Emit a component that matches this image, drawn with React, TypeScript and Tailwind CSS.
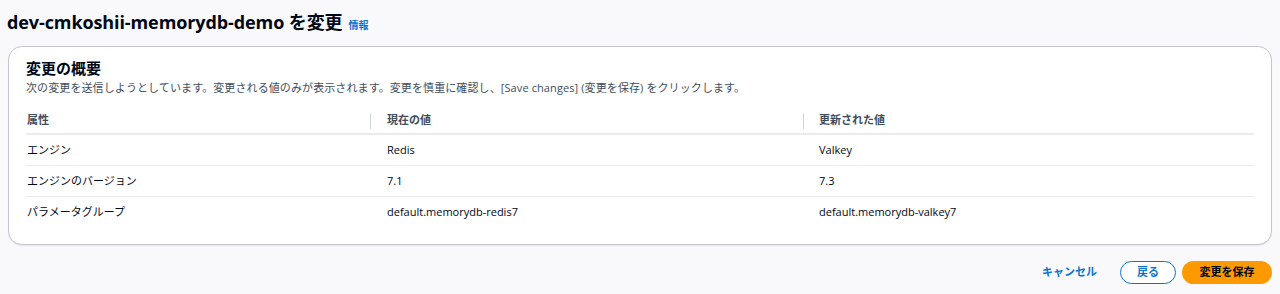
import React from "react";

const rows = [
  ["エンジン", "Redis", "Valkey"],
  ["エンジンのバージョン", "7.1", "7.3"],
  ["パラメータグループ", "default.memorydb-redis7", "default.memorydb-valkey7"],
];

export default function App() {
  return (
    <div
      className="w-[1280px] h-[294px] bg-[#f9f9fb] text-[#000716] overflow-hidden"
      style={{ fontFamily: '"Open Sans", "Noto Sans CJK JP", sans-serif' }}
    >
      <div className="flex items-baseline gap-[6px] pl-[7px] pt-[9px] h-[46px]">
        <h1 className="text-[18px] font-bold leading-[26px] tracking-[-0.1px]">dev-cmkoshii-memorydb-demo を変更</h1>
        <span className="text-[10px] font-bold text-[#0972d3]">情報</span>
      </div>
      <div className="mx-[8px] h-[199px] rounded-[14px] border border-[#c6c6cd] bg-white shadow-[0_1px_1px_rgba(0,7,22,0.08)] px-[17px] pt-[9px]">
        <h2 className="text-[15px] font-bold leading-[24px]">変更の概要</h2>
        <p className="text-[11px] leading-[16px] text-[#414d5c] tracking-[0.1px]">
          次の変更を送信しようとしています。変更される値のみが表示されます。変更を慎重に確認し、[Save changes] (変更を保存) をクリックします。
        </p>
        <div className="mt-[8px]">
          <div className="grid grid-cols-[344px_433px_1fr] h-[31px] pt-[4px] items-center border-b-2 border-[#e9ebed] text-[11px] font-bold text-[#414d5c]">
            <div className="pl-[1px]">属性</div>
            <div className="flex items-center h-full">
              <div className="w-px h-[16px] bg-[#d1d5db]" />
              <div className="pl-[16px]">現在の値</div>
            </div>
            <div className="flex items-center h-full">
              <div className="w-px h-[16px] bg-[#d1d5db]" />
              <div className="pl-[15px]">更新された値</div>
            </div>
          </div>
          {rows.map((r, i) => (
            <div
              key={i}
              className={`grid grid-cols-[344px_433px_1fr] h-[31px] items-center text-[11px] text-[#000716] ${i < rows.length - 1 ? "border-b border-[#e9ebed]" : ""}`}
            >
              <div className="pl-[1px]">{r[0]}</div>
              <div className="pl-[17px]">{r[1]}</div>
              <div className="pl-[16px]">{r[2]}</div>
            </div>
          ))}
        </div>
      </div>
      <div className="flex justify-end items-center gap-[22px] pr-[8px] mt-[16px]">
        <button className="text-[11px] font-bold text-[#0972d3] mr-[1px]">キャンセル</button>
        <div className="flex items-center gap-[6px]">
          <button className="h-[23px] w-[56px] rounded-full border border-[#0972d3] bg-white text-[11px] font-bold text-[#0972d3]">
            戻る
          </button>
          <button className="h-[23px] w-[90px] rounded-full bg-[#ff9900] text-[11px] font-bold text-[#000716]">
            変更を保存
          </button>
        </div>
      </div>
    </div>
  );
}
